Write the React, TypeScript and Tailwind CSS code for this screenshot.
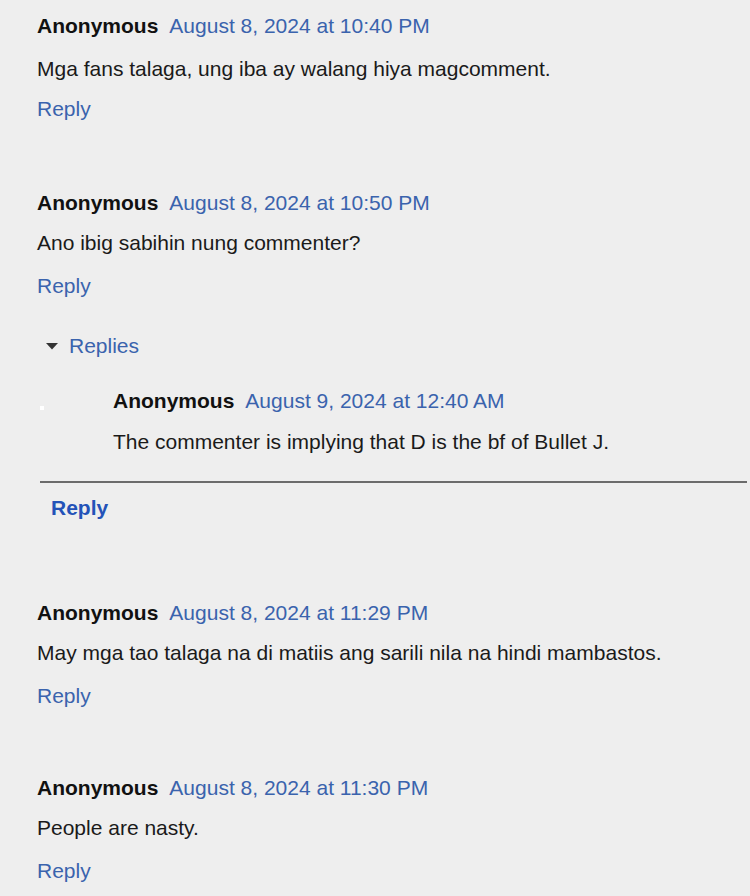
import React from 'react';

type Comment = {
    date: string;
    body: string;
};

const Header: React.FC<{ date: string }> = ({ date }) => (
    <div className="flex items-center gap-[11px] leading-[24px] h-[24px]">
        <span className="font-bold text-[#111111]">Anonymous</span>
        <a href="#" className="text-[#3a63ad]">{date}</a>
    </div>
);

const CommentBlock: React.FC<{ c: Comment; className?: string; first?: boolean; children?: React.ReactNode }> = ({ c, className, first, children }) => (
    <div className={className}>
        <Header date={c.date} />
        <p className={`${first ? 'mt-[19px]' : 'mt-[16px]'} leading-[24px] h-[24px] text-[#1a1a1a]`}>{c.body}</p>
        <a href="#" className={`block ${first ? 'mt-[16px]' : 'mt-[19px]'} leading-[24px] h-[24px] w-fit text-[#3a63ad]`}>Reply</a>
        {children}
    </div>
);

const App: React.FC = () => {
    return (
        <div
            className="w-[750px] h-[896px] overflow-hidden bg-[#eeeeee] pt-[14px] pl-[37px] text-[21px]"
            style={{ fontFamily: '"Liberation Sans", Arial, sans-serif' }}
        >
            <CommentBlock first c={{ date: 'August 8, 2024 at 10:40 PM', body: 'Mga fans talaga, ung iba ay walang hiya magcomment.' }} />

            <CommentBlock
                className="mt-[70px]"
                c={{ date: 'August 8, 2024 at 10:50 PM', body: 'Ano ibig sabihin nung commenter?' }}
            >
                <div className="mt-[36px] flex items-center h-[24px] leading-[24px] pl-[9px]">
                    <svg width="12" height="7" viewBox="0 0 12 7" className="mr-[11px]">
                        <polygon points="0,0 12,0 6,6.5" fill="#333333" />
                    </svg>
                    <a href="#" className="text-[#3a63ad]">Replies</a>
                </div>

                <div className="mt-[31px] flex">
                    <div className="w-[76px] pl-[3px] pt-[17px]">
                        <div className="w-[4px] h-[4px] bg-white" />
                    </div>
                    <div>
                        <Header date="August 9, 2024 at 12:40 AM" />
                        <p className="mt-[17px] leading-[24px] h-[24px] text-[#1a1a1a]">The commenter is implying that D is the bf of Bullet J.</p>
                    </div>
                </div>

                <div className="mt-[27px] ml-[3px] mr-[3px] h-[2px] bg-[#6b6b6b]" />
                <a href="#" className="block mt-[13px] ml-[14px] w-fit font-bold leading-[24px] h-[24px] text-[#2352b8]">Reply</a>
            </CommentBlock>

            <CommentBlock
                className="mt-[81px]"
                c={{ date: 'August 8, 2024 at 11:29 PM', body: 'May mga tao talaga na di matiis ang sarili nila na hindi mambastos.' }}
            />

            <CommentBlock
                className="mt-[68px]"
                c={{ date: 'August 8, 2024 at 11:30 PM', body: 'People are nasty.' }}
            />
        </div>
    );
};

export default App;
